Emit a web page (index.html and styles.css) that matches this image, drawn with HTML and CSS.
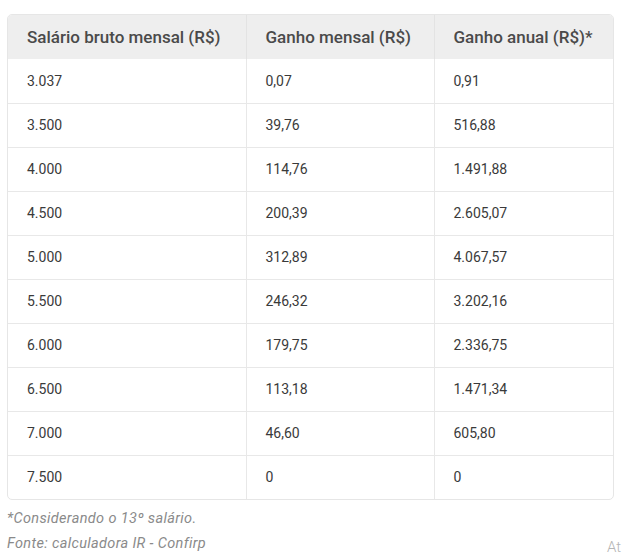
FILE: index.html
```html
<!DOCTYPE html>
<html lang="pt-BR">
<head>
<meta charset="utf-8">
<link rel="stylesheet" href="styles.css">
</head>
<body>
<div class="page">
  <div class="table-wrap">
    <table class="data">
      <colgroup><col class="c1"><col class="c2"><col class="c3"></colgroup>
      <thead>
        <tr><th>Salário bruto mensal (R$)</th><th>Ganho mensal (R$)</th><th>Ganho anual (R$)*</th></tr>
      </thead>
      <tbody>
        <tr><td>3.037</td><td>0,07</td><td>0,91</td></tr>
        <tr><td>3.500</td><td>39,76</td><td>516,88</td></tr>
        <tr><td>4.000</td><td>114,76</td><td>1.491,88</td></tr>
        <tr><td>4.500</td><td>200,39</td><td>2.605,07</td></tr>
        <tr><td>5.000</td><td>312,89</td><td>4.067,57</td></tr>
        <tr><td>5.500</td><td>246,32</td><td>3.202,16</td></tr>
        <tr><td>6.000</td><td>179,75</td><td>2.336,75</td></tr>
        <tr><td>6.500</td><td>113,18</td><td>1.471,34</td></tr>
        <tr><td>7.000</td><td>46,60</td><td>605,80</td></tr>
        <tr><td>7.500</td><td>0</td><td>0</td></tr>
      </tbody>
    </table>
  </div>
  <p class="note">*Considerando o 13º salário.</p>
  <p class="note">Fonte: calculadora IR - Confirp</p>
  <span class="corner">At</span>
</div>
</body>
</html>
```
FILE: styles.css
```css
html, body { margin: 0; padding: 0; background: #fff; }
body { font-family: "Roboto", "Inter", sans-serif; }
.page { position: relative; width: 626px; height: 555px; padding: 14px 12px 0 7px; box-sizing: border-box; overflow: hidden; }
.table-wrap { width: 607px; border: 1px solid #e6e6e6; border-radius: 5px; overflow: hidden; box-sizing: border-box; }
.data { width: 100%; border-collapse: collapse; table-layout: fixed; }
.c1 { width: 238px; }
.c2 { width: 188px; }
.data th { box-sizing: border-box; background: #eeeeee; color: #4a4a4a; font-weight: 500; font-size: 17px; text-align: left; height: 44px; padding: 0 0 0 19px; border-left: 1px solid #e3e3e3; white-space: nowrap; }
.data td { box-sizing: border-box; color: #3a3a3a; font-size: 14px; height: 44px; padding: 0 0 0 19px; border-left: 1px solid #e8e8e8; border-top: 1px solid #e8e8e8; }
.data th:first-child, .data td:first-child { border-left: none; }
.data tbody tr:first-child td { border-top: none; }
.note { margin: 0; font-style: italic; color: #8a8a8a; font-size: 14.5px; letter-spacing: 0.35px; line-height: 25px; }
.note:first-of-type { margin-top: 6px; }
.corner { position: absolute; left: 607px; top: 538px; color: #b5b5b5; font-size: 15px; font-weight: 300; }
```
